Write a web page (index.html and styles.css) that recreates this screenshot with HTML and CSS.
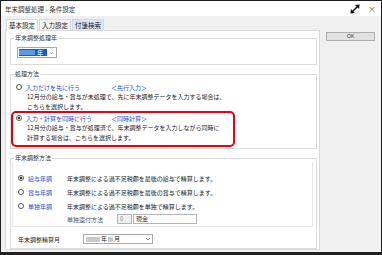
FILE: index.html
```html
<!DOCTYPE html>
<html>
	<head>
		<meta charset="UTF-8">
		<title>年末調整処理 - 条件設定</title>
		<link rel="stylesheet" href="styles.css">
	</head>
	<body>
		<div class="window">
			<div class="titlebar">
				<span class="title">年末調整処理 - 条件設定</span>
				<svg class="expand" viewBox="0 0 10 10">
					<line x1="2" y1="8" x2="8" y2="2" stroke="#111" stroke-width="1.4" />
					<polygon points="9.6,0.4 5,0.9 9.1,5" fill="#111" />
					<polygon points="0.4,9.6 5,9.1 0.9,5" fill="#111" />
				</svg>
				<span class="close">×</span>
			</div>
			<div class="content">
				<div class="main">
					<div class="tabs">
						<div class="tab active">基本設定</div>
						<div class="tab">入力設定</div>
						<div class="tab search">付箋検索</div>
					</div>
					<div class="panel">
						<fieldset class="group g-year">
							<legend>年末調整処理年</legend>
							<div class="select year-select">
								<span class="sel-value"><span class="mask blue"></span>年</span>
								<svg class="chev" viewBox="0 0 6 4"><polyline points="1,1 3,3 5,1" fill="none" stroke="#555" stroke-width="0.7" /></svg>
							</div>
						</fieldset>

						<fieldset class="group g-mode">
							<legend>処理方法</legend>
							<div class="option">
								<div class="opt-head">
									<span class="radio"></span>
									<span class="opt-name">入力だけを先に行う</span>
									<span class="opt-tag">＜先行入力＞</span>
								</div>
								<p class="opt-desc">12月分の給与・賞与が未処理で、先に年末調整データを入力する場合は、<br>こちらを選択します。</p>
							</div>
							<div class="option highlight">
								<div class="opt-head">
									<span class="radio checked"></span>
									<span class="opt-name">入力・計算を同時に行う</span>
									<span class="opt-tag">＜同時計算＞</span>
								</div>
								<p class="opt-desc">12月分の給与・賞与が処理済で、年末調整データを入力しながら同時に<br>計算する場合は、こちらを選択します。</p>
							</div>
						</fieldset>

						<fieldset class="group g-method">
							<legend>年末調整方法</legend>
							<div class="method-box">
								<div class="m-row">
									<span class="m-name"><span class="radio checked"></span>給与年調</span>
									<span>年末調整による過不足税額を最後の給与で精算します。</span>
								</div>
								<div class="m-row">
									<span class="m-name"><span class="radio"></span>賞与年調</span>
									<span>年末調整による過不足税額を最後の賞与で精算します。</span>
								</div>
								<div class="m-row">
									<span class="m-name"><span class="radio"></span>単独年調</span>
									<span>年末調整による過不足税額を単独で精算します。</span>
								</div>
								<div class="m-row">
									<span class="m-name"></span>
									<span class="sub-label">単独還付方法</span>
									<span class="input code">0</span>
									<span class="input cash">現金</span>
								</div>
							</div>
							<div class="month-row">
								<span class="month-label">年末調整精算月</span>
								<div class="select month-select">
									<span class="sel-text"><span class="mask w14"></span>年<span class="mask w5"></span>月</span>
									<svg class="chev" viewBox="0 0 6 4"><polyline points="1,1 3,3 5,1" fill="none" stroke="#555" stroke-width="0.7" /></svg>
								</div>
							</div>
						</fieldset>
					</div>
				</div>
				<div class="side">
					<button class="ok">OK</button>
				</div>
			</div>
		</div>
	</body>
</html>
```
FILE: styles.css
```css
* {
	box-sizing: border-box;
}

body {
	margin: 0;
	font-family: "Noto Sans CJK JP", "Noto Sans", sans-serif;
	font-size: 6px;
	color: #222;
}

.window {
	width: 382px;
	height: 255px;
	border: 1px solid #202020;
	border-bottom-width: 3px;
	background: #f0f0f0;
	display: flex;
	flex-direction: column;
}

.titlebar {
	height: 15px;
	background: #fff;
	display: flex;
	align-items: center;
	padding: 0 5px 0 4px;
}

.title {
	flex: 1;
	font-size: 6.5px;
	color: #333;
}

.expand {
	width: 10px;
	height: 10px;
	margin-right: 8px;
}

.close {
	font-size: 8px;
	color: #666;
	line-height: 8px;
}

.content {
	flex: 1;
	display: flex;
	padding: 3px 0 0 4px;
}

.main {
	width: 316px;
	display: flex;
	flex-direction: column;
}

.tabs {
	display: flex;
	height: 11px;
	padding-left: 1px;
}

.tab {
	font-size: 6.5px;
	line-height: 10px;
	padding: 0 2px;
	border: 1px solid #d9d9d9;
	border-bottom: none;
	background: #f3f3f3;
	margin-right: 1px;
}

.tab.active {
	background: #fff;
	height: 12px;
	position: relative;
	z-index: 1;
}

.tab.search {
	background: #dbe7f5;
}

.panel {
	flex: 1;
	background: #fff;
	border: 1px solid #d9d9d9;
	margin-bottom: 2px;
	padding: 0 2px 0 4px;
}

.group {
	margin: 0;
	border: 1px solid #dcdcdc;
	padding: 0 3px;
	min-width: 0;
}

.group legend {
	padding: 0 1px;
	line-height: 8px;
	color: #333;
}

.g-year {
	margin-top: 3px;
	padding-top: 5px;
	padding-bottom: 6px;
}

.select {
	display: flex;
	align-items: center;
	border: 1px solid #a8a8a8;
	background: #fff;
	height: 11px;
}

.year-select {
	width: 40px;
	margin-left: 3px;
	padding: 1px;
}

.sel-value {
	flex: 1;
	height: 100%;
	background: #0a64d0;
	color: #fff;
	display: flex;
	align-items: center;
	justify-content: flex-end;
	padding-right: 4px;
	line-height: 7px;
}

.mask {
	display: inline-block;
	height: 5px;
	width: 14px;
	background: #c9c9c9;
	margin-right: 1px;
}

.mask.blue {
	background: #5a9ae0;
	width: 16px;
	margin-right: 2px;
}

.mask.w14 {
	width: 14px;
	margin-left: 2px;
}

.mask.w5 {
	width: 5px;
	margin-left: 1px;
}

.chev {
	width: 6px;
	height: 4px;
	margin: 0 1px 0 2px;
}

.g-mode {
	margin-top: 5px;
	padding-top: 4px;
	padding-bottom: 1px;
}

.option {
	padding-left: 2px;
}

.opt-head {
	display: flex;
	align-items: center;
	height: 10px;
}

.radio {
	display: inline-block;
	width: 6px;
	height: 6px;
	border: 1px solid #555;
	border-radius: 50%;
	background: #fff;
	margin-right: 4px;
	flex-shrink: 0;
}

.radio.checked {
	background: radial-gradient(circle, #333 0 1.3px, #fff 1.6px);
}

.opt-name {
	width: 85px;
	color: #1f4fc8;
}

.opt-tag {
	color: #1f4fc8;
}

.opt-desc {
	margin: 0;
	padding-left: 11px;
	line-height: 10px;
}

.option.highlight {
	margin: -1px 0 0 -3px;
	width: 224px;
	border: 2px solid #e60012;
	border-radius: 5px;
	padding: 0 0 2px 3px;
}

.g-method {
	margin-top: 5px;
	padding-bottom: 4px;
}

.method-box {
	margin-left: -2px;
	border: 1px solid #e6e6e6;
	border-top: none;
	padding: 11px 0 2px 5px;
	display: flex;
	flex-direction: column;
	gap: 4px;
}

.m-row {
	display: flex;
	align-items: center;
	height: 10px;
}

.m-row:last-child {
	margin-top: -1px;
}

.m-name {
	width: 49px;
	display: flex;
	align-items: center;
	color: #1f4fc8;
}

.sub-label {
	width: 50px;
	color: #555;
}

.input {
	height: 10px;
	border: 1px solid #b4b4b4;
	line-height: 8px;
	padding-left: 2px;
}

.input.code {
	width: 15px;
	background: #f0f0f0;
	color: #888;
	margin-right: 1px;
}

.input.cash {
	width: 64px;
	color: #333;
}

.month-row {
	display: flex;
	align-items: center;
	margin-top: 7px;
	padding-left: 4px;
}

.month-label {
	width: 65px;
}

.month-select {
	width: 70px;
	height: 10px;
	justify-content: space-between;
}

.sel-text {
	display: flex;
	align-items: center;
	line-height: 8px;
}

.side {
	width: 61px;
	padding: 12px 0 0 6px;
}

.ok {
	width: 49px;
	height: 9px;
	padding: 0;
	border: 1px solid #adadad;
	background: #e1e1e1;
	font-family: "Liberation Sans", sans-serif;
	font-size: 5px;
	line-height: 7px;
	color: #333;
}
```
